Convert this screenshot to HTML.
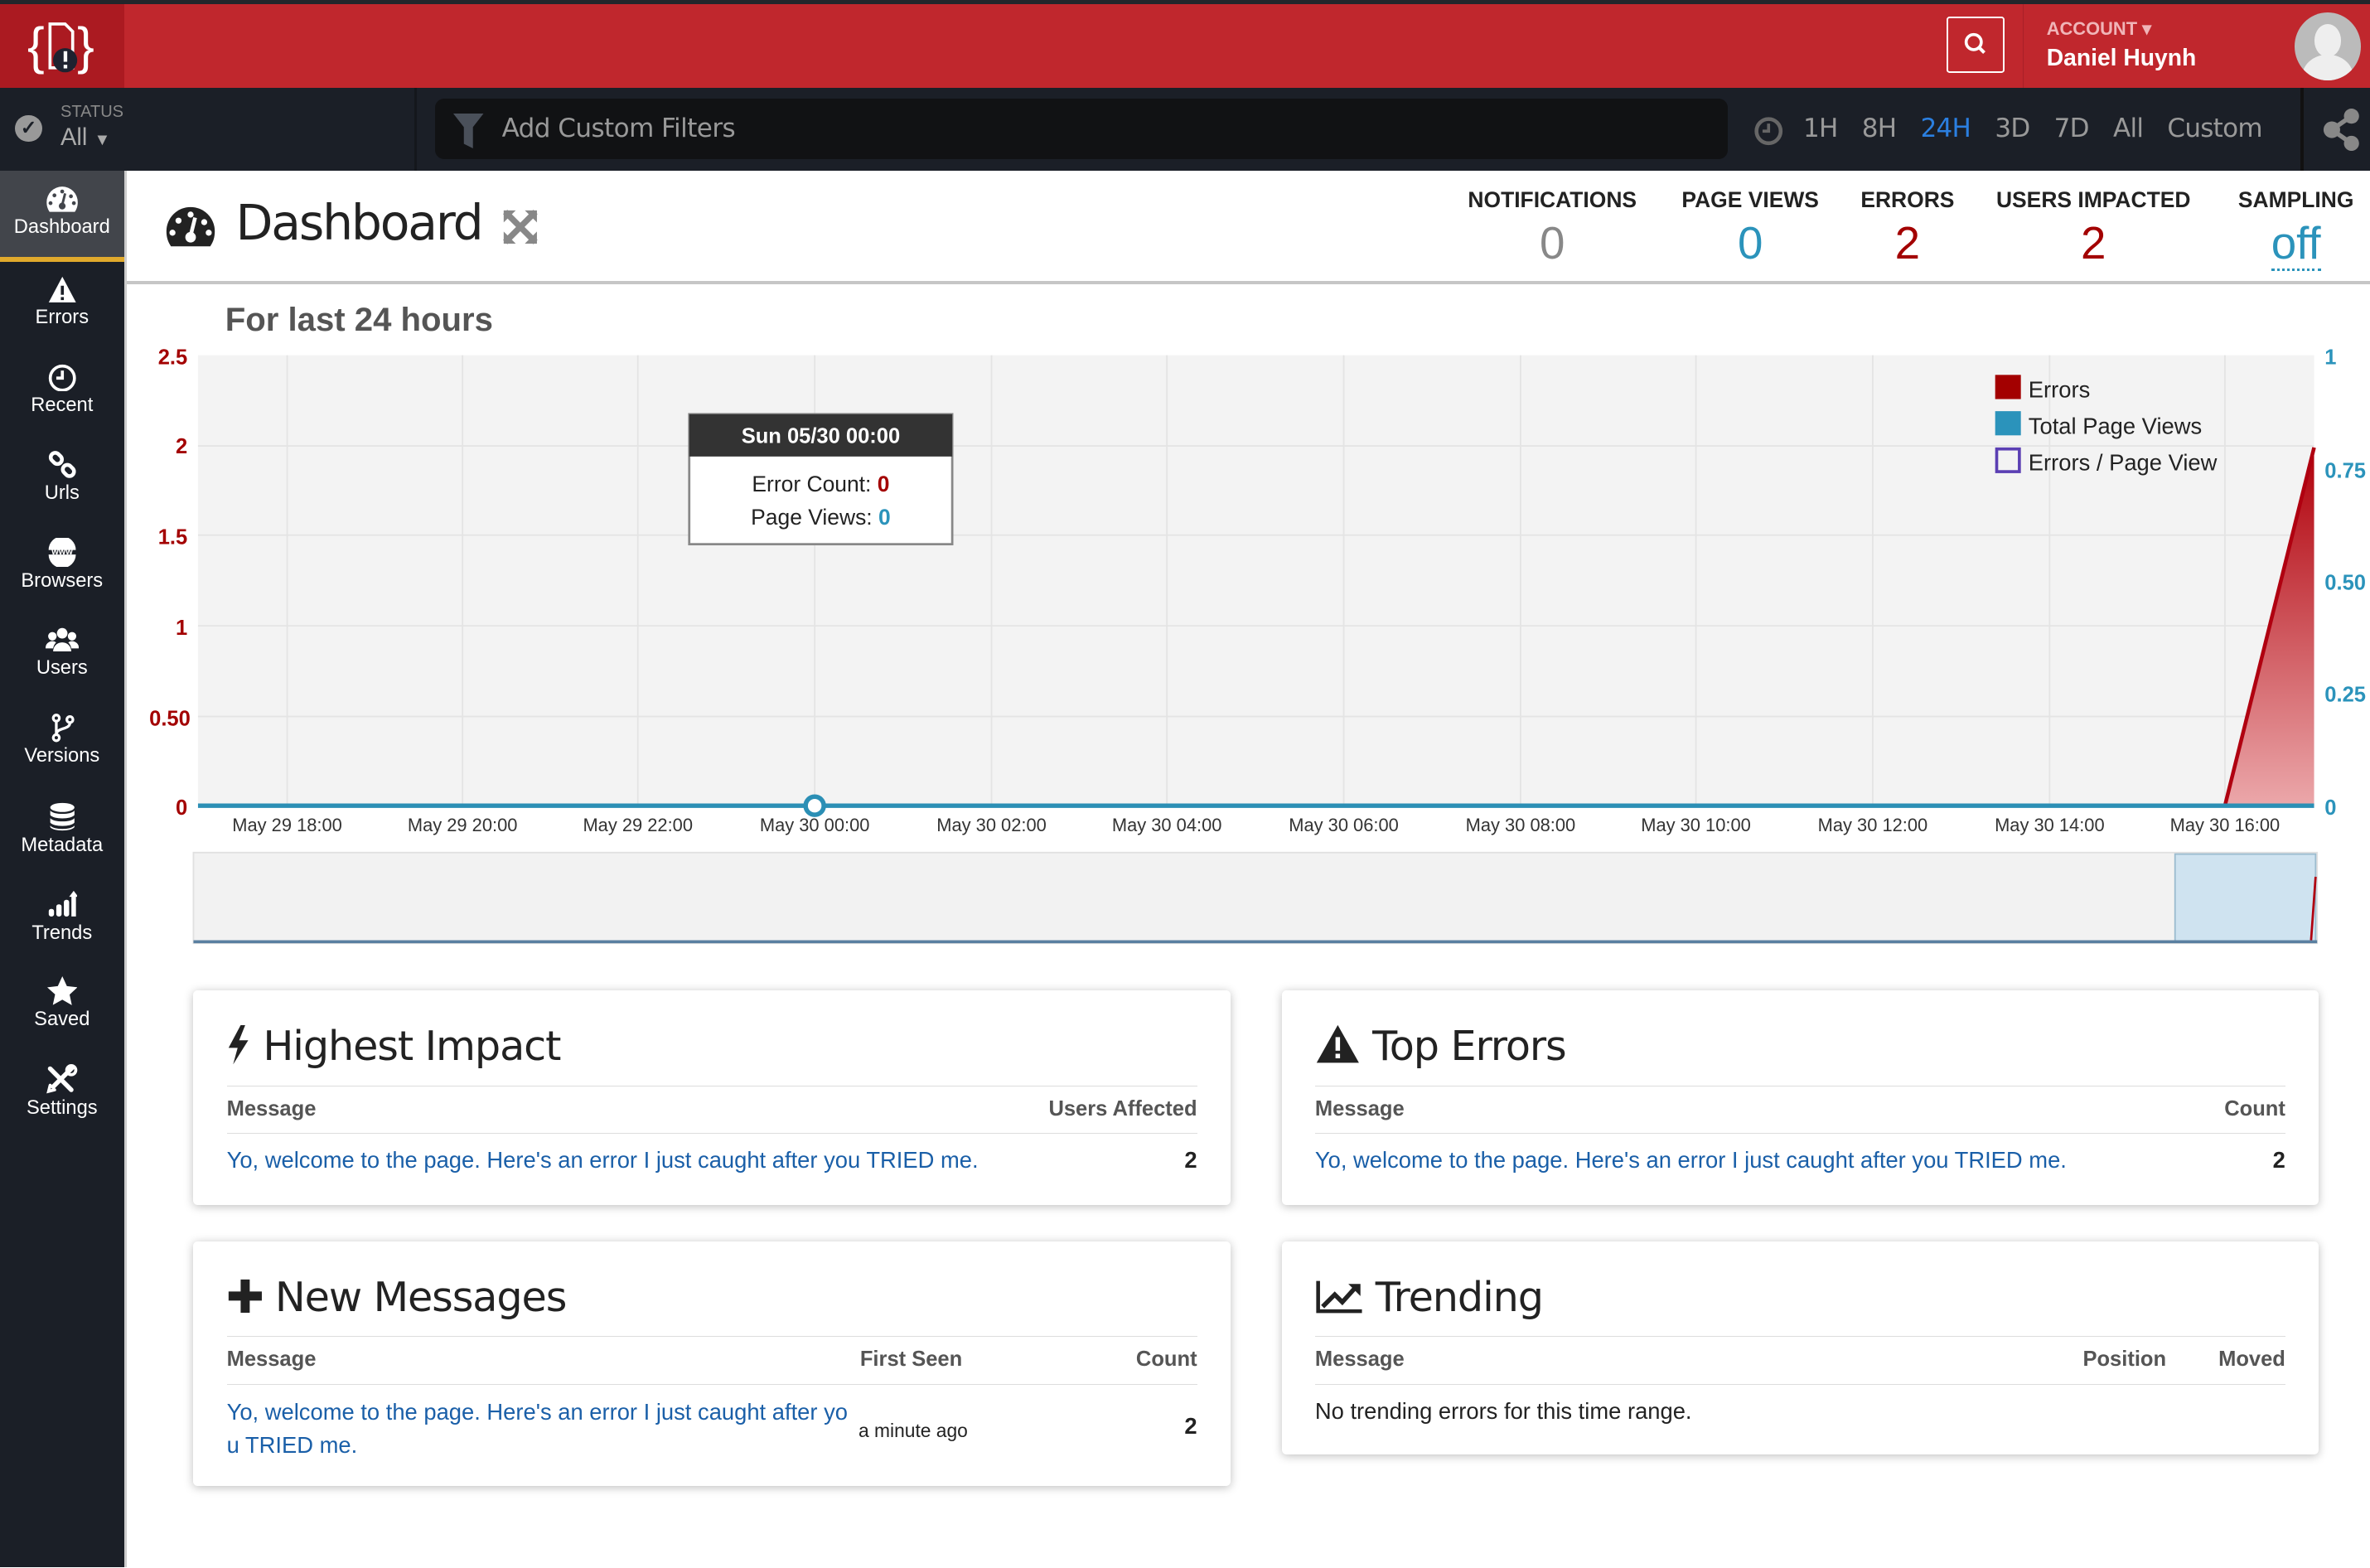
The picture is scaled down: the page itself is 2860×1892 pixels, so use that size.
<!DOCTYPE html>
<html><head><meta charset="utf-8">
<style>
*{box-sizing:border-box;margin:0;padding:0}
html,body{width:2860px;height:1892px;overflow:hidden;background:#fff}
body{font-family:"Liberation Sans",sans-serif}
#w{zoom:1.824;width:1568px;height:1037px;position:relative;overflow:hidden;background:#fff}
.a{position:absolute}
.side .it{position:absolute;left:0;width:82px;text-align:center;color:#fff;font-size:13px}
.side svg{display:block;margin:0 auto 2px auto}
.card{position:absolute;background:#fff;box-shadow:0 1px 6px rgba(0,0,0,.25);border-radius:3px}
.card h2{position:absolute;left:22px;top:21px;font-size:27px;font-weight:normal;color:#222;font-family:"DejaVu Sans",sans-serif;letter-spacing:-0.6px}
.card .hd{position:absolute;left:22px;right:22px;top:63px;height:32px;border-top:1px solid #ddd;border-bottom:1px solid #ddd;font-size:14px;font-weight:bold;color:#555;line-height:30px}
.card .row{position:absolute;left:22px;right:22px;top:104px;font-size:15px;color:#1a5fa8}
.stat{position:absolute;top:124px;text-align:center;font-size:14.5px;font-weight:bold;color:#222}
.stat div{font-size:30px;font-weight:normal;margin-top:2px}
</style></head><body><div id="w">
<div class="a" style="left:0;top:0;width:1568px;height:3px;background:#23262b"></div>
<div class="a" style="left:0;top:3px;width:1568px;height:55px;background:#c0272d"></div>
<div class="a" style="left:0;top:3px;width:82px;height:55px;background:#ab1a21"></div>
<svg class="a" style="left:18px;top:10px" width="46" height="42" viewBox="0 0 46 42">
<text x="0" y="32" fill="#fff" font-size="34" font-family="Liberation Sans">{</text>
<text x="33" y="32" fill="#fff" font-size="34" font-family="Liberation Sans">}</text>
<path d="M15 6h10l5 5v24h-15z" fill="none" stroke="#fff" stroke-width="2"/>
<circle cx="25" cy="30" r="8" fill="#1f2230"/><rect x="24" y="24" width="2.4" height="7" fill="#fff"/><rect x="24" y="33" width="2.4" height="2.4" fill="#fff"/>
</svg>
<div class="a" style="left:1288px;top:11px;width:38px;height:37px;border:1.5px solid #fff;border-radius:2px"></div>
<svg class="a" style="left:1299px;top:21px" width="16" height="17"><circle cx="7" cy="7" r="5" fill="none" stroke="#fff" stroke-width="2"/><path d="M10.5 10.5l3.5 3.5" stroke="#fff" stroke-width="2.2"/></svg>
<div class="a" style="left:1338px;top:3px;width:1px;height:55px;background:#a82027"></div>
<div class="a" style="left:1354px;top:12px;color:#f0b5b8;font-size:12px;font-weight:bold">ACCOUNT ▾</div>
<div class="a" style="left:1354px;top:29px;color:#fff;font-size:15.5px;font-weight:bold">Daniel Huynh</div>
<div class="a" style="left:1518px;top:8px;width:44px;height:45px;border-radius:50%;background:#bbb;overflow:hidden">
<div class="a" style="left:13px;top:8px;width:18px;height:22px;border-radius:50%;background:#eee"></div>
<div class="a" style="left:5px;top:28px;width:34px;height:30px;border-radius:50%;background:#eee"></div></div>

<div class="a" style="left:0;top:58px;width:1568px;height:55px;background:#1b1f27"></div>
<div class="a" style="left:274px;top:58px;width:2px;height:55px;background:#14171c"></div>
<div class="a" style="left:1522px;top:58px;width:2px;height:55px;background:#111"></div>
<div class="a" style="left:10px;top:76px;width:18px;height:18px;border-radius:50%;background:#999;color:#1b1f27;font-size:13px;text-align:center;line-height:18px;font-weight:bold">✓</div>
<div class="a" style="left:40px;top:68px;color:#888;font-size:11px">STATUS</div>
<div class="a" style="left:40px;top:82px;color:#aaa;font-size:16px">All <span style="font-size:11px">▼</span></div>
<div class="a" style="left:288px;top:65px;width:855px;height:40px;background:#111214;border-radius:6px"></div>
<svg class="a" style="left:300px;top:75px" width="20" height="24"><path d="M0 0h20l-7 9v14l-6-3v-11z" fill="#4a505a"/></svg>
<div class="a" style="left:332px;top:75px;color:#999;font-size:17px;font-family:'DejaVu Sans',sans-serif;letter-spacing:-0.3px">Add Custom Filters</div>
<svg class="a" style="left:1160px;top:77px" width="20" height="20"><circle cx="10" cy="10" r="8" fill="none" stroke="#666" stroke-width="2.5"/><path d="M10 5v5H6" stroke="#666" stroke-width="2" fill="none"/></svg>
<div class="a" style="left:1193px;top:75px;color:#999;font-size:17px;font-family:'DejaVu Sans',sans-serif;word-spacing:11px;letter-spacing:-0.4px">1H 8H <span style="color:#2b7fe0">24H</span> 3D 7D All Custom</div>
<svg class="a" style="left:1537px;top:72px" width="26" height="28"><circle cx="19" cy="5" r="5" fill="#888"/><circle cx="19" cy="23" r="5" fill="#888"/><circle cx="6" cy="14" r="5.5" fill="#888"/><path d="M6 14L19 5M6 14L19 23" stroke="#888" stroke-width="3"/></svg>

<div class="a side" style="left:0;top:113px;width:82px;height:924px;background:#1b1f27">
<div class="a" style="left:0;top:0;width:82px;height:57px;background:#42454b"></div>
<div class="a" style="left:0;top:57px;width:82px;height:3px;background:#e0a92c"></div>
<div class="it" style="top:10px"><svg width="22" height="18" viewBox="0 0 34 28"><path d="M17 1A16 16 0 0 0 1 17c0 4 1 7 3 10h26c2-3 3-6 3-10A16 16 0 0 0 17 1z" fill="#fff"/><circle cx="17" cy="6" r="2" fill="#42454b"/><circle cx="9" cy="10" r="2" fill="#42454b"/><circle cx="5" cy="18" r="2" fill="#42454b"/><circle cx="26" cy="11" r="2" fill="#42454b"/><circle cx="29" cy="18" r="2" fill="#42454b"/><path d="M20 8l-3 12" stroke="#42454b" stroke-width="2.5"/><circle cx="17" cy="21" r="3.5" fill="#42454b"/></svg>Dashboard</div>
<div class="it" style="top:69px"><svg width="20" height="19"><path d="M10 1L19 18H1z" fill="#fff"/><rect x="9" y="7" width="2" height="6" fill="#1b1f27"/><rect x="9" y="14.5" width="2" height="2" fill="#1b1f27"/></svg>Errors</div>
<div class="it" style="top:127px"><svg width="20" height="19"><circle cx="10" cy="10" r="8" fill="none" stroke="#fff" stroke-width="2"/><path d="M10 5v5H6" stroke="#fff" stroke-width="2" fill="none"/></svg>Recent</div>
<div class="it" style="top:185px"><svg width="20" height="19"><g fill="none" stroke="#fff" stroke-width="2.5"><rect x="2" y="2" width="8" height="6" rx="3" transform="rotate(45 6 5)"/><rect x="10" y="10" width="8" height="6" rx="3" transform="rotate(45 14 13)"/></g></svg>Urls</div>
<div class="it" style="top:243px"><svg width="22" height="19"><path d="M2 8A9 9 0 0 1 20 8z" fill="#fff"/><path d="M2 11A9 9 0 0 0 20 11z" fill="#fff"/><text x="11" y="11" font-size="6" fill="#fff" text-anchor="middle" font-weight="bold">www</text></svg>Browsers</div>
<div class="it" style="top:301px"><svg width="22" height="19"><circle cx="11" cy="5" r="3.5" fill="#fff"/><circle cx="4.5" cy="7" r="2.8" fill="#fff"/><circle cx="17.5" cy="7" r="2.8" fill="#fff"/><path d="M5 17a6 6 0 0 1 12 0z" fill="#fff"/><path d="M0 15a4.5 4.5 0 0 1 7-4 7 7 0 0 0-2 4zM22 15a4.5 4.5 0 0 0-7-4 7 7 0 0 1 2 4z" fill="#fff"/></svg>Users</div>
<div class="it" style="top:359px"><svg width="20" height="19"><g fill="none" stroke="#fff" stroke-width="1.8"><circle cx="6" cy="3" r="2"/><circle cx="15" cy="4" r="2"/><circle cx="6" cy="16" r="2"/><path d="M6 5v9M15 6c0 5-9 3-9 8"/></g></svg>Versions</div>
<div class="it" style="top:417px"><svg width="20" height="20"><g fill="#fff"><ellipse cx="10" cy="4" rx="8" ry="3"/><path d="M2 6c2 3 14 3 16 0v3c-2 3-14 3-16 0zM2 11c2 3 14 3 16 0v3c-2 3-14 3-16 0zM2 16c2 3 14 3 16 0v1c-2 3-14 3-16 0z"/></g></svg>Metadata</div>
<div class="it" style="top:475px"><svg width="20" height="20"><g fill="#fff"><rect x="1" y="13" width="3.5" height="5" rx="1.5"/><rect x="6" y="10" width="3.5" height="8" rx="1.5"/><rect x="11" y="7" width="3.5" height="11" rx="1.5"/><rect x="16" y="4" width="3" height="14"/><path d="M14.5 5l3-4 3 4z"/></g></svg>Trends</div>
<div class="it" style="top:533px"><svg width="20" height="19"><path d="M10 0l3 6.5 7 .8-5.2 4.8 1.5 7L10 15.5 3.7 19l1.5-7L0 7.3l7-.8z" fill="#fff"/></svg>Saved</div>
<div class="it" style="top:591px"><svg width="22" height="20"><g stroke="#fff" fill="none" stroke-linecap="round"><path d="M3 3l14 14" stroke-width="3"/><path d="M18 2L5 15" stroke-width="3"/><path d="M3 14l-1 4 4-1" stroke-width="2"/><circle cx="17" cy="4" r="3" stroke-width="2"/></g></svg>Settings</div>
</div>
<div class="a" style="left:82px;top:113px;width:2px;height:924px;background:#ccc"></div>

<svg class="a" style="left:109px;top:136px" width="34" height="28" viewBox="0 0 34 28"><path d="M17 1A16 16 0 0 0 1 17c0 4 1 7 3 10h26c2-3 3-6 3-10A16 16 0 0 0 17 1z" fill="#222"/><circle cx="17" cy="6" r="2" fill="#fff"/><circle cx="9" cy="10" r="2" fill="#fff"/><circle cx="5" cy="18" r="2" fill="#fff"/><circle cx="26" cy="11" r="2" fill="#fff"/><circle cx="29" cy="18" r="2" fill="#fff"/><path d="M20 8l-3 12" stroke="#fff" stroke-width="2.5"/><circle cx="17" cy="21" r="3.5" fill="#fff"/></svg>
<div class="a" style="left:156px;top:129px;font-size:32px;color:#222;font-family:'DejaVu Sans',sans-serif;letter-spacing:-1.2px">Dashboard</div>
<svg class="a" style="left:332px;top:138px" width="24" height="24"><path d="M2 2l20 20M22 2L2 22" stroke="#888" stroke-width="4"/><path d="M1 1h8L1 9zM23 1h-8l8 8zM1 23h8l-8-8zM23 23h-8l8-8z" fill="#888"/></svg>
<div class="stat" style="left:968px;width:118px">NOTIFICATIONS<div style="color:#888">0</div></div>
<div class="stat" style="left:1110px;width:96px">PAGE VIEWS<div style="color:#2b93bb">0</div></div>
<div class="stat" style="left:1230px;width:64px">ERRORS<div style="color:#a30000">2</div></div>
<div class="stat" style="left:1320px;width:130px">USERS IMPACTED<div style="color:#a30000">2</div></div>
<div class="stat" style="left:1476px;width:86px">SAMPLING<div style="color:#2b93bb"><span style="border-bottom:2px dotted #2b93bb;line-height:30px">off</span></div></div>
<div class="a" style="left:84px;top:186px;width:1484px;height:2px;background:#c6c6c6"></div>

<div class="a" style="left:149px;top:199px;font-size:22px;font-weight:bold;color:#555">For last 24 hours</div>

<svg class="a" style="left:0;top:0" width="1568" height="640" font-family="Liberation Sans">
<rect x="131" y="235" width="1400" height="298" fill="#f3f3f3"/>
<g stroke="#e4e4e4" stroke-width="1">
<path d="M131 295H1531M131 354H1531M131 414H1531M131 474H1531"/>
<path d="M190 235V533M306 235V533M422 235V533M539 235V533M656 235V533M772 235V533M889 235V533M1006 235V533M1122 235V533M1239 235V533M1356 235V533M1472 235V533"/>
</g>
<g fill="#a30000" font-size="14" font-weight="bold" text-anchor="end">
<text x="124" y="241">2.5</text><text x="124" y="300">2</text><text x="124" y="360">1.5</text><text x="124" y="420">1</text><text x="126" y="480">0.50</text><text x="124" y="539">0</text></g>
<g fill="#2b93bb" font-size="14" font-weight="bold">
<text x="1538" y="241">1</text><text x="1538" y="316">0.75</text><text x="1538" y="390">0.50</text><text x="1538" y="464">0.25</text><text x="1538" y="539">0</text></g>
<defs><linearGradient id="g" x1="0" y1="0" x2="0" y2="1"><stop offset="0" stop-color="#b0000a"/><stop offset="1" stop-color="#eba7aa"/></linearGradient></defs>
<path d="M1472 533L1531 296V533Z" fill="url(#g)"/>
<path d="M1472 533L1531 296" stroke="#b00010" stroke-width="2.5" fill="none"/>
<path d="M131 533H1531" stroke="#2b8fb5" stroke-width="3"/>
<circle cx="539" cy="533" r="6" fill="#fff" stroke="#2b8fb5" stroke-width="3"/>
<g fill="#333" font-size="12" text-anchor="middle">
<text x="190" y="550">May 29 18:00</text><text x="306" y="550">May 29 20:00</text><text x="422" y="550">May 29 22:00</text><text x="539" y="550">May 30 00:00</text><text x="656" y="550">May 30 02:00</text><text x="772" y="550">May 30 04:00</text><text x="889" y="550">May 30 06:00</text><text x="1006" y="550">May 30 08:00</text><text x="1122" y="550">May 30 10:00</text><text x="1239" y="550">May 30 12:00</text><text x="1356" y="550">May 30 14:00</text><text x="1472" y="550">May 30 16:00</text></g>
<rect x="1320" y="248" width="17" height="16" fill="#a30000"/><text x="1342" y="263" font-size="15" fill="#222">Errors</text>
<rect x="1320" y="272" width="17" height="16" fill="#2b93bb"/><text x="1342" y="287" font-size="15" fill="#222">Total Page Views</text>
<rect x="1321" y="297" width="15" height="15" fill="none" stroke="#5b3fb3" stroke-width="2"/><text x="1342" y="311" font-size="15" fill="#222">Errors / Page View</text>
<rect x="128" y="564" width="1405" height="60" fill="#f2f2f2" stroke="#e0e0e0"/>
<rect x="1439" y="565" width="93" height="58" fill="#cfe3f0" stroke="#9bbccf"/>
<path d="M1529 622L1532 580" stroke="#b00010" stroke-width="1.5"/>
<path d="M128 623H1533" stroke="#5a7fa0" stroke-width="2"/>
<rect x="456" y="274" width="174" height="86" fill="#fff" stroke="#888" stroke-width="1.5"/>
<rect x="456" y="274" width="174" height="28" fill="#333"/>
<text x="543" y="293" fill="#fff" font-size="14" font-weight="bold" text-anchor="middle">Sun 05/30 00:00</text>
<text x="543" y="325" fill="#222" font-size="14.5" text-anchor="middle">Error Count: <tspan fill="#a30000" font-weight="bold">0</tspan></text>
<text x="543" y="347" fill="#222" font-size="14.5" text-anchor="middle">Page Views: <tspan fill="#2b93bb" font-weight="bold">0</tspan></text>
</svg>

<div class="card" style="left:128px;top:655px;width:686px;height:142px">
<h2><svg width="16" height="26" style="vertical-align:-3px"><path d="M9 0L1 15h6l-3 11 10-16H8l4-10z" fill="#222"/></svg> Highest Impact</h2>
<div class="hd">Message<span style="float:right">Users Affected</span></div>
<div class="row">Yo, welcome to the page. Here's an error I just caught after you TRIED me.<span style="float:right;color:#222;font-weight:bold">2</span></div>
</div>
<div class="card" style="left:848px;top:655px;width:686px;height:142px">
<h2><svg width="30" height="27" style="vertical-align:-3px"><path d="M15 1L29 26H1z" fill="#222"/><rect x="13.5" y="9" width="3" height="9" fill="#fff"/><rect x="13.5" y="20" width="3" height="3" fill="#fff"/></svg> Top Errors</h2>
<div class="hd">Message<span style="float:right">Count</span></div>
<div class="row">Yo, welcome to the page. Here's an error I just caught after you TRIED me.<span style="float:right;color:#222;font-weight:bold">2</span></div>
</div>
<div class="card" style="left:128px;top:821px;width:686px;height:162px">
<h2><svg width="24" height="24" style="vertical-align:-2px"><path d="M9 1h6v8h8v6h-8v8H9v-8H1V9h8z" fill="#222"/></svg> New Messages</h2>
<div class="hd">Message<span style="position:absolute;left:419px">First Seen</span><span style="float:right">Count</span></div>
<div class="row" style="width:420px;line-height:22px;top:102px">Yo, welcome to the page. Here's an error I just caught after yo u TRIED me.</div>
<div class="a" style="left:440px;top:118px;font-size:12.5px;color:#222">a minute ago</div>
<div class="a" style="right:22px;top:114px;font-size:15px;font-weight:bold;color:#222">2</div>
</div>
<div class="card" style="left:848px;top:821px;width:686px;height:141px">
<h2><svg width="32" height="24" style="vertical-align:-2px"><path d="M2 2V22H31" stroke="#222" stroke-width="2.5" fill="none"/><path d="M5 19l8-8 5 5 9-10" stroke="#222" stroke-width="3" fill="none"/><path d="M22 4h8v8z" fill="#222"/></svg> Trending</h2>
<div class="hd">Message<span style="position:absolute;left:508px">Position</span><span style="float:right">Moved</span></div>
<div class="row" style="color:#222">No trending errors for this time range.</div>
</div>
</div></body></html>
